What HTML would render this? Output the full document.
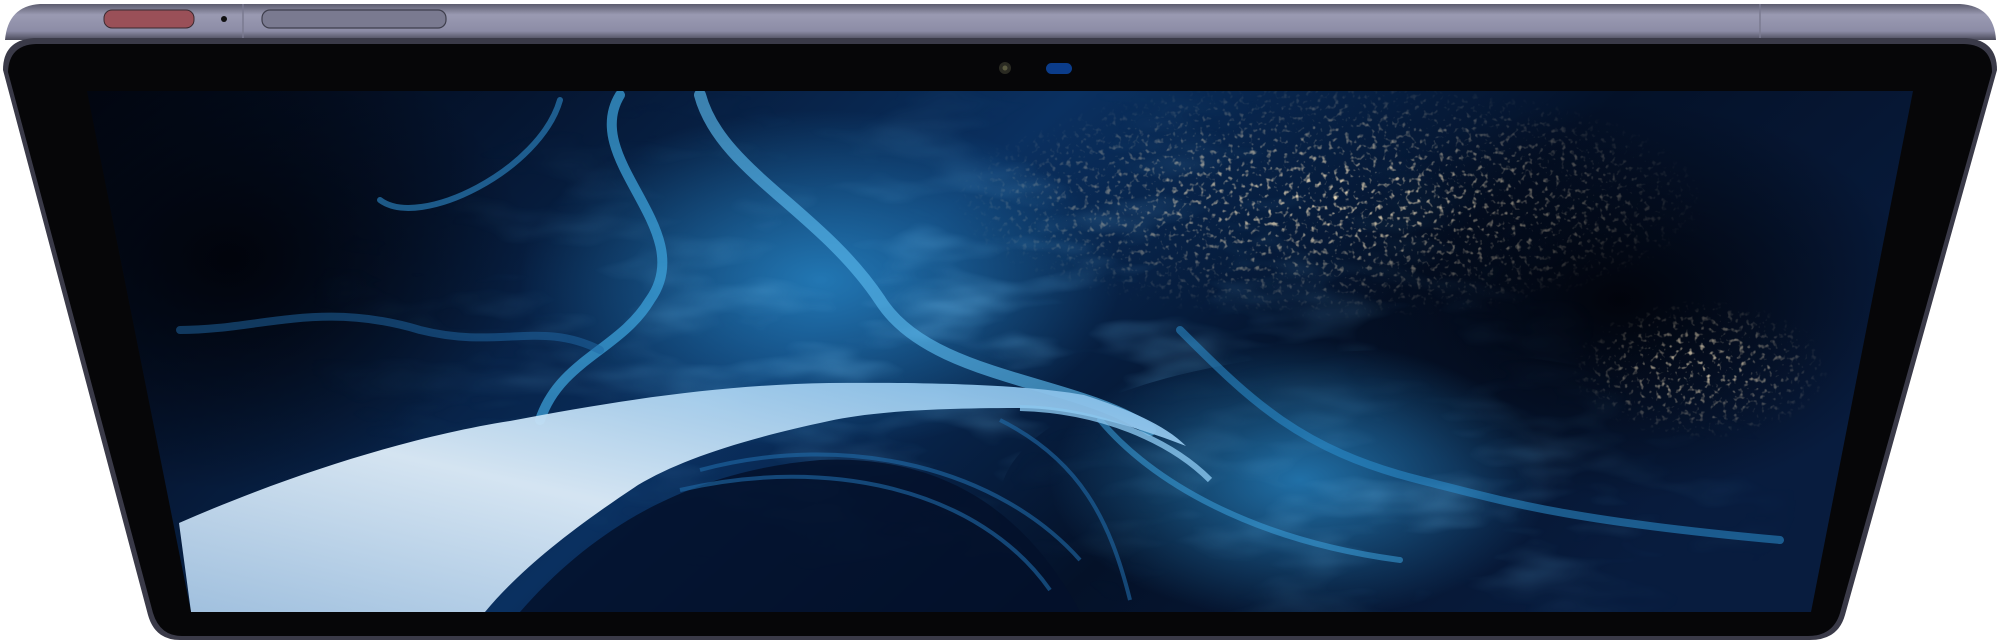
<!DOCTYPE html>
<html><head><meta charset="utf-8"><style>
html,body{margin:0;padding:0;background:#fff;width:2000px;height:642px;overflow:hidden}
svg{display:block}
</style></head><body>
<svg width="2000" height="642" viewBox="0 0 2000 642" xmlns="http://www.w3.org/2000/svg">
<defs>
<linearGradient id="strip" x1="0" y1="0" x2="0" y2="1">
<stop offset="0" stop-color="#5c5c6e"/><stop offset="0.3" stop-color="#9a9ab2"/><stop offset="0.75" stop-color="#8c8ca6"/><stop offset="1" stop-color="#4a4a5a"/></linearGradient>
<linearGradient id="base" x1="0" y1="0" x2="1" y2="0.3">
<stop offset="0" stop-color="#01030a"/><stop offset="0.25" stop-color="#051530"/><stop offset="0.5" stop-color="#0a3060"/><stop offset="0.75" stop-color="#041128"/><stop offset="1" stop-color="#081c3e"/></linearGradient>
<radialGradient id="glow1" cx="0.5" cy="0.5" r="0.5"><stop offset="0" stop-color="#2a8fd0" stop-opacity="0.75"/><stop offset="1" stop-color="#2a8fd0" stop-opacity="0"/></radialGradient>
<radialGradient id="dark" cx="0.5" cy="0.5" r="0.5"><stop offset="0" stop-color="#01030a" stop-opacity="0.95"/><stop offset="1" stop-color="#01030a" stop-opacity="0"/></radialGradient>
<linearGradient id="white" x1="0" y1="1" x2="1" y2="0"><stop offset="0" stop-color="#a8c8e6"/><stop offset="0.45" stop-color="#dfeefa"/><stop offset="1" stop-color="#7ab8e6"/></linearGradient>
<filter id="tex" x="0" y="0" width="100%" height="100%"><feTurbulence type="fractalNoise" baseFrequency="0.008 0.025" numOctaves="3" seed="4"/><feColorMatrix values="0 0 0 0 0.15  0 0 0 0 0.5  0 0 0 0 0.85  0 0 0 1.6 -0.75"/></filter>
<filter id="speck" x="0" y="0" width="100%" height="100%"><feTurbulence type="fractalNoise" baseFrequency="0.18" numOctaves="2" seed="7"/><feColorMatrix values="0 0 0 0 0.85  0 0 0 0 0.72  0 0 0 0 0.5  0 0 0 4 -2.3"/></filter>
<radialGradient id="goldmask" cx="0.5" cy="0.5" r="0.5"><stop offset="0" stop-color="#fff"/><stop offset="1" stop-color="#000"/></radialGradient>
<mask id="gm"><ellipse cx="1330" cy="200" rx="380" ry="120" fill="url(#goldmask)"/><ellipse cx="1700" cy="370" rx="130" ry="70" fill="url(#goldmask)"/></mask>
<mask id="tm"><rect x="0" y="0" width="2000" height="642" fill="#000"/><ellipse cx="950" cy="330" rx="650" ry="260" fill="url(#goldmask)"/><ellipse cx="1400" cy="500" rx="400" ry="150" fill="url(#goldmask)"/></mask>
<clipPath id="scr"><polygon points="87,91 1913,91 1811,612 191,612"/></clipPath>
</defs>
<path d="M5,40 Q8,6 40,4 L1960,4 Q1994,6 1996,40 Z" fill="url(#strip)"/>
<line x1="243" y1="4" x2="243" y2="40" stroke="#7a7a90" stroke-width="1.5"/>
<line x1="1760" y1="4" x2="1760" y2="40" stroke="#7a7a90" stroke-width="1.5"/>
<rect x="104" y="10" width="90" height="18" rx="8" fill="#9a5058" stroke="#3a2a30" stroke-width="1"/>
<circle cx="224" cy="19" r="3" fill="#111"/>
<rect x="262" y="10" width="184" height="18" rx="8" fill="#7a7a90" stroke="#3e3e4c" stroke-width="1.2"/>
<path d="M3,70 Q3,40 34,38 L1966,38 Q1997,40 1997,70 L1845,615 Q1838,640 1810,640 L180,640 Q155,640 148,615 Z" fill="#3a3a48"/>
<path d="M8,72 Q9,45 36,44 L1964,44 Q1992,45 1992,72 L1840,613 Q1833,636 1808,636 L182,636 Q160,636 153,613 Z" fill="#060608"/>
<circle cx="1005" cy="68" r="6" fill="#2a2a22"/><circle cx="1005" cy="68" r="2.5" fill="#5a5a40"/>
<rect x="1046" y="63" width="26" height="11" rx="5.5" fill="#0b3c8a"/>
<g clip-path="url(#scr)">
<rect x="0" y="80" width="2000" height="540" fill="url(#base)"/>
<ellipse cx="230" cy="260" rx="300" ry="230" fill="url(#dark)"/>
<ellipse cx="1620" cy="300" rx="300" ry="200" fill="url(#dark)"/>
<ellipse cx="820" cy="280" rx="300" ry="170" fill="url(#glow1)"/>
<ellipse cx="1300" cy="480" rx="250" ry="140" fill="url(#glow1)"/>
<g mask="url(#tm)"><rect x="0" y="80" width="2000" height="540" filter="url(#tex)" opacity="0.7"/></g>
<g mask="url(#gm)"><rect x="800" y="80" width="1200" height="400" filter="url(#speck)"/></g>
<g fill="none" stroke-linecap="round">
<path d="M620,95 C580,160 700,230 650,300 C620,350 560,360 540,420" stroke="#3fa6e0" stroke-width="10" opacity="0.7"/>
<path d="M700,95 C720,170 820,210 880,300 C930,380 1080,380 1150,430" stroke="#59b8ec" stroke-width="12" opacity="0.65"/>
<path d="M560,100 C540,170 420,230 380,200" stroke="#2f8ccc" stroke-width="6" opacity="0.6"/>
<path d="M180,330 C260,330 320,300 420,330 C500,350 540,320 600,350" stroke="#1f6aa8" stroke-width="8" opacity="0.5"/>
<path d="M1180,330 C1250,400 1300,450 1420,480 C1500,500 1560,520 1780,540" stroke="#2b8fd0" stroke-width="8" opacity="0.55"/>
<path d="M1100,420 C1150,480 1250,540 1400,560" stroke="#3aa0dc" stroke-width="6" opacity="0.55"/>
</g>
<path d="M520,612 C600,520 700,470 820,460 C930,455 1020,500 1080,612 Z" fill="#03112a" opacity="0.85"/>
<g fill="none" stroke="#1f6aa8" stroke-width="4" opacity="0.6">
<path d="M700,470 C850,430 1000,470 1080,560"/>
<path d="M680,490 C830,455 980,490 1050,590"/>
<path d="M1000,420 C1080,460 1110,520 1130,600"/>
</g>
<path d="M179,523 C300,470 420,435 510,421 C620,400 720,385 829,383 C930,382 1030,385 1084,395 C1130,410 1165,425 1186,446 C1120,420 1060,408 1020,408 C930,408 870,412 829,421 C740,440 680,460 638,485 C570,530 520,570 485,612 L191,612 Z" fill="url(#white)" opacity="0.95"/>
<path d="M1020,408 C1100,410 1170,440 1210,480" fill="none" stroke="#8ac6ee" stroke-width="6" opacity="0.8"/>
</g>
</svg>
</body></html>
